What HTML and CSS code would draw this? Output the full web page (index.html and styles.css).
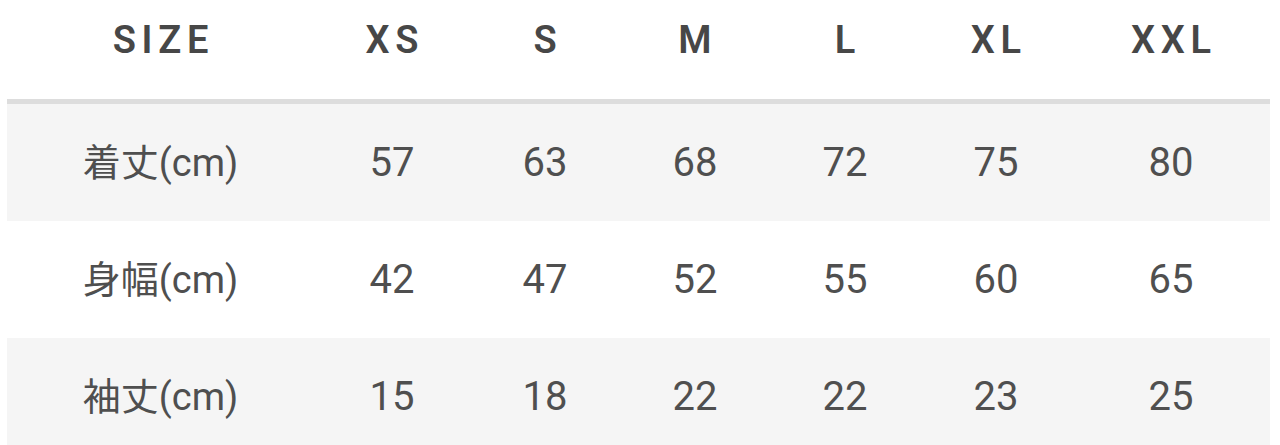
FILE: index.html
```html
<!DOCTYPE html>
<html lang="ja">
<head>
<meta charset="utf-8">
<link rel="stylesheet" href="styles.css">
</head>
<body>
<div class="wrap">
<table class="size-table">
  <colgroup>
    <col class="c-label"><col class="c-xs"><col class="c-s"><col class="c-m"><col class="c-l"><col class="c-xl"><col class="c-xxl">
  </colgroup>
  <thead>
    <tr>
      <th>SIZE</th><th>XS</th><th>S</th><th>M</th><th>L</th><th>XL</th><th>XXL</th>
    </tr>
  </thead>
  <tbody>
    <tr class="shade">
      <td class="label">着丈(cm)</td><td>57</td><td>63</td><td>68</td><td>72</td><td>75</td><td>80</td>
    </tr>
    <tr>
      <td class="label">身幅(cm)</td><td>42</td><td>47</td><td>52</td><td>55</td><td>60</td><td>65</td>
    </tr>
    <tr class="shade">
      <td class="label">袖丈(cm)</td><td>15</td><td>18</td><td>22</td><td>22</td><td>23</td><td>25</td>
    </tr>
  </tbody>
</table>
</div>
</body>
</html>
```

FILE: styles.css
```css
html, body {
  margin: 0;
  padding: 0;
  background: #ffffff;
  overflow: hidden;
}
.wrap {
  padding: 0 10px 0 7px;
}
.size-table {
  width: 1263px;
  table-layout: fixed;
  border-collapse: collapse;
  font-family: Roboto, "Noto Sans CJK JP", sans-serif;
  color: #555555;
}
.c-label { width: 307px; }
.c-xs { width: 156px; }
.c-s { width: 150px; }
.c-m { width: 150px; }
.c-l { width: 150px; }
.c-xl { width: 152px; }
.c-xxl { width: 198px; }
.size-table th {
  height: 79px;
  padding: 0 0 20px 0;
  font-size: 38px;
  line-height: 44px;
  font-weight: 600;
  letter-spacing: 0.15em;
  text-indent: 0.15em;
  color: #474747;
  text-align: center;
  vertical-align: middle;
  border-bottom: 5px solid #dddddd;
}
.size-table td {
  height: 117px;
  padding: 0;
  font-size: 40px;
  line-height: 48px;
  text-align: center;
  vertical-align: middle;
  color: #4f4f4f;
}
.size-table td.label {
  font-size: 38px;
}
.size-table tr.shade td {
  background: #f5f5f5;
}
```
